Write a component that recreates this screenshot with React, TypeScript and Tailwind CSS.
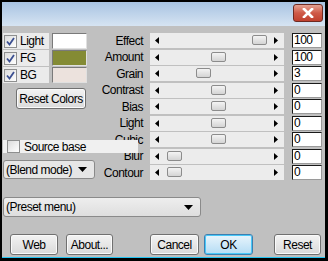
import React from 'react';

interface SliderRow {
  label: string;
  value: string;
  thumb: number;
}

const rows: SliderRow[] = [
  { label: 'Effect', value: '100', thumb: 102 },
  { label: 'Amount', value: '100', thumb: 61 },
  { label: 'Grain', value: '3', thumb: 46 },
  { label: 'Contrast', value: '0', thumb: 61 },
  { label: 'Bias', value: '0', thumb: 61 },
  { label: 'Light', value: '0', thumb: 61 },
  { label: 'Cubic', value: '0', thumb: 61 },
  { label: 'Blur', value: '0', thumb: 17 },
  { label: 'Contour', value: '0', thumb: 17 },
];

const font = { fontFamily: '"Liberation Sans", Arial, sans-serif' };

function CheckBox({ checked }: { checked: boolean }) {
  return (
    <div className="w-[13px] h-[13px] shrink-0 border border-[#8e8f8f] bg-gradient-to-br from-[#dcdcdc] to-white flex items-center justify-center">
      {checked && (
        <svg width="9" height="9" viewBox="0 0 9 9" aria-hidden="true">
          <path d="M1 4.5 L3.5 7.5 L8 1" fill="none" stroke="#3b4f91" strokeWidth="1.8" />
        </svg>
      )}
    </div>
  );
}

function ColorRow({ label, color }: { label: string; color: string }) {
  return (
    <div className="flex h-[16px] gap-[3px]">
      <div className="w-[46px] h-full bg-[#ebebeb] flex items-center gap-[3px] pl-[1px]">
        <CheckBox checked />
        <span className="leading-none">{label}</span>
      </div>
      <div
        className="w-[35px] h-full border-t border-l border-[#7a7a7a] border-r border-b border-r-[#e0e0e0] border-b-[#e0e0e0]"
        style={{ backgroundColor: color }}
      />
    </div>
  );
}

function Btn({ children, w, primary }: { children: React.ReactNode; w: string; primary?: boolean }) {
  return (
    <div
      className={
        primary
          ? `${w} h-[21px] rounded-[3px] border border-[#3c7fb1] shadow-[inset_0_0_0_1px_#48c8f8] bg-gradient-to-b from-[#e9f5fc] to-[#b4dcf4] flex items-center justify-center`
          : `${w} h-[21px] rounded-[3px] border border-[#707070] shadow-[inset_0_0_0_1px_#fafafa] bg-gradient-to-b from-[#f3f3f3] to-[#dadada] flex items-center justify-center`
      }
    >
      {children}
    </div>
  );
}

function DownArrow() {
  return (
    <svg width="9" height="5" viewBox="0 0 9 5" aria-hidden="true">
      <path d="M0 0 H9 L4.5 5 Z" fill="#000" />
    </svg>
  );
}

export default function App() {
  return (
    <div
      className="w-[328px] h-[261px] bg-black flex flex-col pt-[2px] pl-[2px] pr-[3px] pb-[3px] text-black text-[12px] tracking-[-0.5px] whitespace-nowrap"
      style={font}
    >
      <div className="h-[24px] shrink-0 bg-gradient-to-b from-[#a8c3e2] to-[#d6e4f2] flex justify-end pt-[2px] pr-[2px]">
        <div className="w-[30px] h-[18px] rounded-[3px] border border-[#6e2a22] bg-gradient-to-b from-[#e4a193] via-[#cf5a48] to-[#c0402e] flex items-center justify-center">
          <svg width="12" height="10" viewBox="0 0 12 10" aria-hidden="true">
            <path d="M2 1 L10 9 M10 1 L2 9" stroke="#fff" strokeWidth="2.6" strokeLinecap="square" />
          </svg>
        </div>
      </div>

      <div className="flex-1 relative bg-[#c0c0c0] border-b border-[#23c4f2] flex flex-col">
        <div className="flex pt-[7px] pl-[1px]">
          <div className="w-[92px] flex flex-col">
            <div className="flex flex-col gap-[1px]">
              <ColorRow label="Light" color="#ffffff" />
              <ColorRow label="FG" color="#848b34" />
              <ColorRow label="BG" color="#ece2dd" />
            </div>
            <div className="mt-[5px] ml-[13px]">
              <Btn w="w-[70px]">Reset Colors</Btn>
            </div>
            <div className="mt-[51px] w-[92px] h-[19px] rounded-[3px] border border-[#8a8a8a] bg-[#e6e6e6] flex items-center justify-between pl-[2px] pr-[7px]">
              <span>(Blend mode)</span>
              <DownArrow />
            </div>
          </div>

          <div className="flex flex-col gap-[1.5px]">
            {rows.map((r) => (
              <div key={r.label} className="flex items-center h-[15px]">
                <div className="w-[48px] text-right leading-none">{r.label}</div>
                <div className="relative ml-[7px] w-[134px] h-full bg-[#ececec] flex items-center justify-between pl-[5px] pr-[6px]">
                  <svg width="4" height="7" viewBox="0 0 4 7" aria-hidden="true">
                    <path d="M4 0 V7 L0 3.5 Z" fill="#000" />
                  </svg>
                  <div
                    className="absolute top-[2px] w-[15px] h-[10px] rounded-[2px] border border-[#8c8c8c] bg-gradient-to-b from-[#f4f4f4] to-[#d4d4d4]"
                    style={{ left: r.thumb }}
                  />
                  <svg width="4" height="7" viewBox="0 0 4 7" aria-hidden="true">
                    <path d="M0 0 V7 L4 3.5 Z" fill="#000" />
                  </svg>
                </div>
                <div className="ml-[8px] w-[30px] h-[15px] bg-white border-t border-l border-[#1a1a1a] border-r border-b border-r-[#9a9a9a] border-b-[#9a9a9a] pl-[1px] leading-[13px]">
                  {r.value}
                </div>
              </div>
            ))}
          </div>
        </div>

        <div className="mt-[17px] ml-[1px] w-[198px] h-[20px] rounded-[3px] border border-[#8a8a8a] bg-gradient-to-b from-[#eeeeee] to-[#dedede] flex items-center justify-between pl-[2px] pr-[7px]">
          <span>(Preset menu)</span>
          <DownArrow />
        </div>

        <div className="mt-[17px] flex items-center pl-[8px]">
          <Btn w="w-[48px]">Web</Btn>
          <div className="ml-[8px]">
            <Btn w="w-[47px]">About...</Btn>
          </div>
          <div className="ml-[37px]">
            <Btn w="w-[49px]">Cancel</Btn>
          </div>
          <div className="ml-[5px]">
            <Btn w="w-[49px]" primary>OK</Btn>
          </div>
          <div className="ml-[21px]">
            <Btn w="w-[47px]">Reset</Btn>
          </div>
        </div>

        <div className="absolute left-[1px] top-[114px] w-[135px] h-[13px] bg-[#f0f0f0] flex items-center gap-[4px] pl-[4px]">
          <CheckBox checked={false} />
          <span className="leading-none">Source base</span>
        </div>
      </div>
    </div>
  );
}
